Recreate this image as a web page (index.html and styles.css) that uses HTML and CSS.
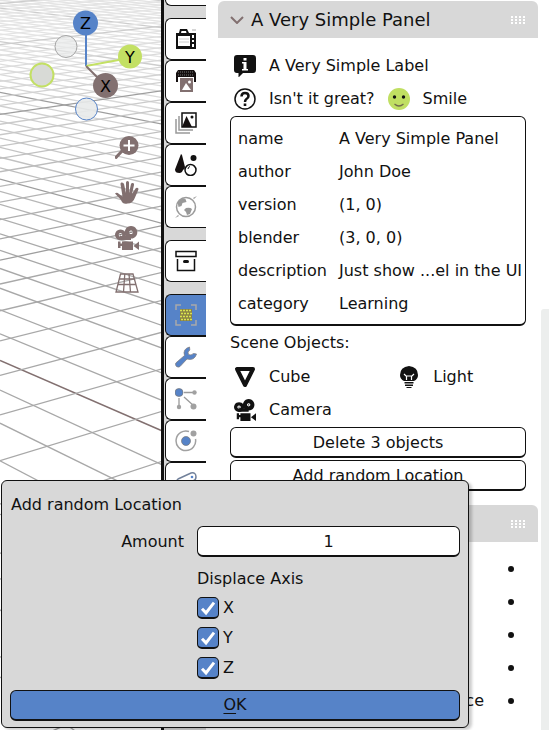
FILE: index.html
```html
<!DOCTYPE html>
<html lang="en">
<head>
<meta charset="utf-8">
<title>Add random Location</title>
<link rel="stylesheet" href="styles.css">
</head>
<body>
<svg class="defs" width="0" height="0" aria-hidden="true">
  <symbol id="movie-camera" viewBox="0 0 24 24">
    <path fill-rule="evenodd" d="M5.500 3.500a5.500 5.300 0 1 0 .01 0zM5.500 7a1.800 1.800 0 1 1-.01 0z"/>
    <path fill-rule="evenodd" d="M16 0a6.300 6.300 0 1 0 .01 0zM16 4.500a1.800 1.800 0 1 1-.01 0z"/>
    <path d="M5 10h11v4H5zM3 15.500h2.500v2H7v-2h11V24H7v-4H5.500v2H3zM18.500 20l5.500-4.500V24z"/>
    <circle cx="5.500" cy="8.800" r=".7"/><circle cx="16" cy="6.300" r=".7"/>
  </symbol>
  <symbol id="grip" viewBox="0 0 15 8">
    <path d="M0 0h2v2H0zM4 0h2v2H4zM8 0h2v2H8zM12 0h2v2h-2zM0 3h2v2H0zM4 3h2v2H4zM8 3h2v2H8zM12 3h2v2h-2zM0 6h2v2H0zM4 6h2v2H4zM8 6h2v2H8zM12 6h2v2h-2z"/>
  </symbol>
</svg>
<div class="app">
  <section class="viewport" aria-label="3D viewport">
    <svg class="scene" aria-hidden="true">
      <g id="grid"></g>
      <g fill="none" stroke-width="2">
        <path class="axis-z" d="M86 66V30"/>
        <path class="axis-y" d="M86 66l38-7"/>
        <path class="axis-x" d="M86 66l16 16"/>
      </g>
      <circle class="ring-x" cx="66" cy="46.500" r="11"/>
      <circle class="ring-y" cx="42" cy="75" r="11.500"/>
      <circle class="ring-z" cx="86.500" cy="109" r="11"/>
      <circle class="ball-z" cx="85.500" cy="23" r="12.500"/>
      <circle class="ball-y" cx="130" cy="56.500" r="12"/>
      <circle class="ball-x" cx="105.500" cy="85.500" r="12.500"/>
      <g class="ball-text">
        <text x="85.500" y="29">Z</text>
        <text x="130" y="62.500">Y</text>
        <text x="105.500" y="91.500">X</text>
      </g>
    </svg>
    <div class="tools">
      <button type="button" class="tool" aria-label="Zoom">
        <svg width="24" height="24" viewBox="0 0 24 24"><circle cx="14" cy="9.500" r="9.500"/><path d="M7 15l-6 6.500" stroke="#827070" stroke-width="3" stroke-linecap="round"/><path d="M14 4v11M8.500 9.500h11" stroke="#fff" stroke-width="2"/></svg>
      </button>
      <button type="button" class="tool" aria-label="Pan">
        <svg width="24" height="24" viewBox="0 0 24 24"><path d="M0 12.500q2-1.500 4 .5l3.500 2.500L5.500 3q0-2 1.500-1.500Q8.500 1.500 9 3l2 9V1.500q0-1.500 1.500-1.500T14 1.500V12l2-9q.5-1.500 2-1 1.500.4 1 2l-2 9 3.500-5.500q1-1.200 2.500-.5 1 .8 0 2.500l-3 7q-2 6-7.500 6Q8 24 6 19z"/></svg>
      </button>
      <button type="button" class="tool" aria-label="Camera view">
        <svg width="24" height="24"><use href="#movie-camera"/></svg>
      </button>
      <button type="button" class="tool" aria-label="Switch projection">
        <svg width="24" height="20" viewBox="0 0 24 20"><path fill="none" stroke="#827070" stroke-width="1.300" d="M5.500 1h12.500l5 18H1zM4.500 6h15M3 11.500h18M9.800 1L8.500 19M14 1l1.500 18"/></svg>
      </button>
    </div>
  </section>

  <nav class="tabs" aria-label="Properties">
    <div class="tab-group">
      <button type="button" class="tab stub" aria-label="Tool"></button>
    </div>
    <div class="tab-group">
      <button type="button" class="tab" aria-label="Render">
        <svg width="22" height="22" viewBox="0 0 22 22"><path fill="#111" fill-rule="evenodd" d="M1 5h3l1-4h7l2 4h7v16H1zM3 8v10h12V8zM6.500 3L6 5h5.500L11 3z"/><path d="M4 11h10M4 14h10" stroke="#ccc" stroke-width="1"/><path fill="#fff" d="M17 7h2v3h-2zM17 12h2v2h-2zM17 16h2v3h-2z"/><path d="M17 2h4" stroke="#aaa"/></svg>
      </button>
      <button type="button" class="tab" aria-label="Output">
        <svg width="22" height="22" viewBox="0 0 22 22"><path fill="#151010" d="M3 0h16l2 3v9h-2V7H3v5H1V3z"/><path fill="#827070" d="M5 8h13v14H5z"/><path fill="#fff" d="M7 20l4-7 5 7z"/><circle cx="14.500" cy="12" r="1.500" fill="#fff"/><path d="M3 2h16M3 5h16" stroke="#777" stroke-dasharray="1 1"/></svg>
      </button>
      <button type="button" class="tab" aria-label="View layer">
        <svg width="22" height="22" viewBox="0 0 22 22"><path fill="none" stroke="#999" stroke-width="1.500" d="M1 7v14h14M4 4v14h14"/><path fill="#fff" stroke="#111" stroke-width="1.500" d="M7 1h14v14H7z"/><path fill="#151010" d="M7 15l4.500-11 5.500 11z"/><circle cx="17" cy="5" r="1.500" fill="#111"/></svg>
      </button>
      <button type="button" class="tab" aria-label="Scene">
        <svg width="22" height="22" viewBox="0 0 22 22"><path fill="#151010" d="M6 0l1 1 3 12q0 2-2 3-1 3-3.500 3Q0 19 0 15.500z"/><circle cx="18.500" cy="4" r="3" fill="#111"/><circle cx="15.500" cy="16" r="5.500" fill="#fff" stroke="#111" stroke-width="1.500"/><path d="M13 15q0-2 2-2.500" fill="none" stroke="#111"/></svg>
      </button>
      <button type="button" class="tab" aria-label="World">
        <svg width="22" height="22" viewBox="0 0 22 22"><circle cx="11" cy="11" r="9.500" fill="#fff" stroke="#9b9b9b" stroke-width="1.500"/><path fill="#999" d="M2.500 6q4-5 8-3l1 3-4 1-1 3-3 1zM11 12q4-1 6 1l-2 5-3 1-1-3-2-2zM0 22l3-3 1 1zM22 0l-3 3-1-1z"/></svg>
      </button>
    </div>
    <div class="tab-group">
      <button type="button" class="tab" aria-label="Collection">
        <svg width="22" height="22" viewBox="0 0 22 22"><path fill="none" stroke="#111" stroke-width="1.500" d="M1 1.500h20v5H1zM2.500 9v11.500h17V9"/><rect x="8" y="10" width="6" height="3" rx="1.500" fill="#111"/></svg>
      </button>
    </div>
    <div class="tab-group">
      <button type="button" class="tab active" aria-label="Object">
        <svg width="22" height="22" viewBox="0 0 22 22"><path fill="none" stroke="#a9a9a9" stroke-width="1.500" d="M1 6V1h5M16 1h5v5M21 16v5h-5M6 21H1v-5"/><path fill="#8a8244" d="M5 5h12v12H5z"/><path d="M5 6.500h12M5 12.500h12" stroke="#d9e34e" stroke-width="1.500" stroke-dasharray="2 1"/><path d="M6 9.500h11M6 15.500h11" stroke="#d9e34e" stroke-width="1.500" stroke-dasharray="2 1"/></svg>
      </button>
      <button type="button" class="tab" aria-label="Modifiers">
        <svg width="22" height="22" viewBox="0 0 22 22"><path fill="#5683c8" stroke="#7d7d84" stroke-width=".8" d="M14.500 1q-7 2-5 8.500L.8 17q-.8 2 .7 3.500 2 1.200 3.500 0L12 13q7.500 2 9.500-5l-3-.5Q16 10 13.500 8.500 12 6 14.800 4z"/></svg>
      </button>
      <button type="button" class="tab" aria-label="Particles">
        <svg width="22" height="22" viewBox="0 0 22 22"><path stroke="#9b9b9b" stroke-width="1.300" d="M9 4.500h10M4 10v9M9 9l10 9"/><circle cx="4" cy="4.500" r="4" fill="#5683c8" stroke="#777" stroke-width=".7"/><g fill="#a1a1a1"><circle cx="19.500" cy="4.500" r="2.200"/><circle cx="4" cy="19" r="2.200"/><circle cx="18.500" cy="18.500" r="3"/></g></svg>
      </button>
      <button type="button" class="tab" aria-label="Physics">
        <svg width="22" height="22" viewBox="0 0 22 22"><path fill="none" stroke="#a1a1a1" stroke-width="1.500" d="M14 1.500A9.800 9.800 0 1 0 20.500 9"/><circle cx="18.500" cy="3.500" r="3" fill="#a1a1a1"/><circle cx="11" cy="11" r="4.500" fill="#5683c8" stroke="#777" stroke-width=".7"/></svg>
      </button>
      <button type="button" class="tab" aria-label="Constraints">
        <svg width="22" height="22" viewBox="0 0 22 22"><path fill="none" stroke="#71809a" stroke-width="1.500" d="M3 7l13-6q5-1 5 4 0 3-3 4L6 17q-4 2-5-3t2-7z"/><circle cx="17" cy="5" r="1.300" fill="#5683c8"/></svg>
      </button>
    </div>
  </nav>

  <main class="properties">
    <section class="panel">
      <h1 class="panel-header">
        <svg class="chevron" width="14" height="8" viewBox="0 0 14 8"><path d="M1 1l6 6 6-6"/></svg>
        <span class="panel-title">A Very Simple Panel</span>
        <svg class="grip" width="15" height="8"><use href="#grip"/></svg>
      </h1>
      <div class="panel-body">
        <div class="row">
          <span class="item">
            <svg width="22" height="22" viewBox="0 0 22 22"><path fill="#111" d="M3 0h16q3 0 3 3v12q0 3-3 3H9l-4.500 4.500V18H3q-3 0-3-3V3q0-3 3-3z"/><path fill="#fff" d="M9.500 3h3v2.500h-3zM8 7h4.500v7H14v1.500H8V14h1.500V8.500H8z"/></svg>
            A Very Simple Label
          </span>
        </div>
        <div class="row">
          <span class="item">
            <svg width="22" height="22" viewBox="0 0 22 22"><circle cx="11" cy="11" r="10" fill="none" stroke="#111" stroke-width="1.500"/><path fill="none" stroke="#111" stroke-width="2.500" d="M7.500 8.500q0-3.500 3.500-3.500t3.500 3q0 2-2 3-1.500 1-1.500 3"/><path fill="#111" d="M9.700 15.500h2.600V18H9.700z"/></svg>
            Isn't it great?
          </span>
          <span class="item">
            <svg width="22" height="22" viewBox="0 0 22 22"><circle cx="11" cy="11" r="11" fill="#c0df62"/><circle cx="6.500" cy="9" r="1.700" fill="#111"/><circle cx="15.500" cy="9" r="1.700" fill="#111"/><path fill="none" stroke="#746d4d" stroke-width="1.300" d="M6.500 16q4.500 4 9 0"/></svg>
            Smile
          </span>
        </div>
        <table class="info">
          <tbody>
            <tr><th scope="row">name</th><td>A Very Simple Panel</td></tr>
            <tr><th scope="row">author</th><td>John Doe</td></tr>
            <tr><th scope="row">version</th><td>(1, 0)</td></tr>
            <tr><th scope="row">blender</th><td>(3, 0, 0)</td></tr>
            <tr><th scope="row">description</th><td>Just show ...el in the UI</td></tr>
            <tr><th scope="row">category</th><td>Learning</td></tr>
          </tbody>
        </table>
        <h2 class="caption">Scene Objects:</h2>
        <div class="objects">
          <span class="item">
            <svg width="22" height="22" viewBox="0 0 22 22"><path fill="none" stroke="#111" stroke-width="4" stroke-linejoin="round" d="M3 3h16l-8 16z"/></svg>
            Cube
          </span>
          <span class="item">
            <svg width="22" height="22" viewBox="0 0 22 22"><path fill="#111" d="M11 0q9 1 9 9 0 4-4 6H6Q2 13 2 9q0-8 9-9zM6.500 16h9v1.500h-9zM7 18.500h8V20H7zM8.500 21h5v1h-5z"/><path fill="none" stroke="#fff" stroke-width="1.200" d="M6 8l2 2h6l2-2M8.500 10v4M13.500 10v4"/></svg>
            Light
          </span>
          <span class="item">
            <svg width="22" height="22"><use href="#movie-camera" fill="#111"/></svg>
            Camera
          </span>
        </div>
        <div class="actions">
          <button type="button" class="button">Delete 3 objects</button>
          <button type="button" class="button">Add random Location</button>
        </div>
      </div>
    </section>
    <section class="panel next">
      <div class="panel-header">
        <svg class="grip" width="15" height="8"><use href="#grip"/></svg>
      </div>
      <ul class="props">
        <li><i class="dot"></i></li>
        <li><i class="dot"></i></li>
        <li><i class="dot"></i></li>
        <li><i class="dot"></i></li>
        <li>ce<i class="dot"></i></li>
      </ul>
    </section>
    <div class="scrollbar"></div>
  </main>

  <form class="dialog" role="dialog" aria-labelledby="dialog-title">
    <h2 class="dialog-title" id="dialog-title">Add random Location</h2>
    <div class="fields">
      <label class="field-label" for="amount">Amount</label>
      <input class="number" id="amount" type="text" inputmode="numeric" value="1">
      <fieldset class="axes">
        <legend>Displace Axis</legend>
        <label class="check"><input type="checkbox" checked>X</label>
        <label class="check"><input type="checkbox" checked>Y</label>
        <label class="check"><input type="checkbox" checked>Z</label>
      </fieldset>
    </div>
    <button type="button" class="ok"><u>O</u>K</button>
  </form>
</div>
<script src="grid.js"></script>
</body>
</html>
```
FILE: styles.css
```css
* {
  box-sizing: border-box;
}

body {
  margin: 0;
  background: #fff;
  color: #111;
  font: 16px/20px "DejaVu Sans", sans-serif;
}

button,
input {
  font: inherit;
  color: inherit;
}

h1,
h2 {
  margin: 0;
  font-weight: normal;
}

svg {
  display: block;
  flex: none;
}

.defs {
  position: absolute;
}

.app {
  position: relative;
  display: grid;
  grid-template-columns: minmax(0, 161fr) 45px minmax(0, 343fr);
  grid-template-rows: 100%;
  height: 100vh;
  overflow: hidden;
}

/* 3D viewport */
.viewport {
  position: relative;
  overflow: hidden;
}

.scene {
  position: absolute;
  inset: 0;
  width: 100%;
  height: 100%;
}

.axis-z { stroke: #5683c8; }
.axis-y { stroke: #c3e064; }
.axis-x { stroke: #827070; }
.ball-z { fill: #5683c8; }
.ball-y { fill: #c3e064; }
.ball-x { fill: #827070; }
.ring-x { fill: #e8e9e9; fill-opacity: 0.7; stroke: #a5a5a5; }
.ring-y { fill: #d8dad6; stroke: #c3e064; stroke-width: 2; }
.ring-z { fill: #e8eaea; fill-opacity: 0.9; stroke: #5683c8; }

.ball-text {
  text-anchor: middle;
}

.tools {
  position: relative;
  display: flex;
  flex-direction: column;
  align-items: flex-end;
  gap: 21px;
  padding: 136px 22px 0 0;
}

.tool {
  display: grid;
  place-items: center;
  width: 24px;
  height: 24px;
  padding: 0;
  border: 0;
  background: none;
  fill: #827070;
}

/* Property tabs */
.tabs {
  display: flex;
  flex-direction: column;
  gap: 12px;
  padding-left: 1px;
  border-left: 3px solid #111;
  background: #d8d8d8;
}

.tab {
  display: grid;
  place-items: center start;
  width: 100%;
  height: 42px;
  padding: 0 0 0 9px;
  border: 1px solid #111;
  border-right: 0;
  border-radius: 6px 0 0 6px;
  background: #fff;
}

.tab.stub {
  height: 6px;
  border-top: 0;
  border-radius: 0 0 0 6px;
}

.tab.active {
  background: #5683c8;
}

/* Properties */
.properties {
  position: relative;
  padding: 1px 11px 0 12px;
}

.panel-header {
  display: flex;
  align-items: center;
  gap: 7px;
  height: 37px;
  padding: 0 12px;
  border-radius: 6px 6px 0 0;
  background: #d8d8d8;
  font-size: 18px;
}

.chevron {
  fill: none;
  stroke: #827070;
  stroke-width: 2;
}

.grip {
  margin-left: auto;
  fill: #fff;
}

.panel-body {
  padding: 11px 12px 0;
}

.row {
  display: flex;
  gap: 13px;
}

.item {
  display: flex;
  align-items: center;
  gap: 13px;
  height: 33px;
  white-space: nowrap;
}

.row,
.objects {
  padding-left: 4px;
}

.info {
  width: 100%;
  margin-top: 1px;
  padding: 5px 0 4px 7px;
  border: 1px solid #111;
  border-bottom-width: 2px;
  border-radius: 6px;
  border-spacing: 0;
}

.info th,
.info td {
  height: 33px;
  padding: 0;
  font-weight: normal;
  text-align: left;
  white-space: nowrap;
}

.info th {
  width: 101px;
}

.caption {
  font-size: 16px;
  line-height: 34px;
}

.objects {
  display: grid;
  grid-template-columns: 9fr 7fr;
}

.actions {
  display: grid;
  gap: 2px;
  margin-top: 1px;
}

.button {
  height: 31px;
  padding: 2px 0 0;
  border: 1px solid #111;
  border-bottom-width: 2px;
  border-radius: 6px;
  background: #fff;
}

.next {
  margin-top: 14px;
}

.props {
  margin: 0;
  padding: 10px 24px 0 0;
  list-style: none;
}

.props li {
  display: flex;
  align-items: center;
  justify-content: flex-end;
  gap: 24px;
  height: 33px;
}

.dot {
  width: 6px;
  height: 6px;
  border-radius: 50%;
  background: #111;
}

.scrollbar {
  position: absolute;
  top: 309px;
  right: 0;
  bottom: 0;
  width: 8px;
  border-radius: 3px 0 0 0;
  background: #eceeed;
}

/* Operator dialog */
.dialog {
  position: absolute;
  top: 480px;
  left: 1px;
  right: 80px;
  padding: 14px 8px 6px;
  border: 1px solid #111;
  border-radius: 6px;
  background: #d8d8d8;
  box-shadow: 3px 2px 3px #0003;
}

.dialog-title {
  padding-left: 1px;
  font-size: 16px;
  line-height: 20px;
}

.fields {
  display: grid;
  grid-template-columns: 174px 1fr;
  column-gap: 13px;
  align-items: center;
  padding-top: 11px;
}

.field-label {
  text-align: right;
}

.number {
  width: 100%;
  height: 31px;
  padding: 0;
  border: 1px solid #111;
  border-bottom-width: 2px;
  border-radius: 6px;
  background: #fff;
  text-align: center;
}

.axes {
  grid-column: 2;
  display: grid;
  gap: 8px;
  margin: 0;
  padding: 8px 0 0;
  border: 0;
}

.axes legend {
  padding: 12px 0 0;
}

.check {
  display: flex;
  align-items: center;
  gap: 4px;
  height: 22px;
}

.check input {
  appearance: none;
  width: 22px;
  height: 22px;
  margin: 0;
  border: 1px solid #111;
  border-bottom-width: 2px;
  border-radius: 5px;
}

.check input:checked {
  background: #5683c8 url("data:image/svg+xml,%3Csvg xmlns='http://www.w3.org/2000/svg' viewBox='0 0 20 20'%3E%3Cpath d='M4 11l4 4 8-10' fill='none' stroke='%23fff' stroke-width='3'/%3E%3C/svg%3E") center / 20px 20px no-repeat;
}

.ok {
  display: block;
  width: 100%;
  height: 31px;
  margin-top: 11px;
  padding: 0;
  border: 1px solid #111;
  border-bottom-width: 2px;
  border-radius: 6px;
  background: #5683c8;
}

.ok u {
  text-underline-offset: 3px;
}
```
FILE: grid.js
```js
// Perspective floor grid: both line families converge on the horizon.
const grid = document.getElementById("grid");
const horizon = -153.5;
const reach = 700;

function addFamily(vanish, base, step, from, to, isMajor, axis) {
  for (let n = from; n <= to; n++) {
    const y0 = 1 / (base + step * n) + horizon;
    const slope = (vanish.y - y0) / vanish.x;
    const line = document.createElementNS("http://www.w3.org/2000/svg", "line");
    line.setAttribute("x1", 0);
    line.setAttribute("y1", y0);
    line.setAttribute("x2", reach);
    line.setAttribute("y2", y0 + slope * reach);
    const nearness = Math.min(1, Math.max(0, (y0 - 40) / 200));
    let shade = Math.round(228 - nearness * 60);
    if (isMajor(n)) shade = y0 > 50 ? 158 : 205;
    line.setAttribute("stroke", n === axis ? "#827070" : `rgb(${shade},${shade},${shade})`);
    line.setAttribute("stroke-width", n === axis ? 1.5 : 1.3);
    grid.append(line);
  }
}

addFamily({ x: -1122, y: -127 }, 0.001946, 0.000106, -8, 60, n => n % 10 === 0, 0);
addFamily({ x: 2180, y: -205 }, 0.001628, 0.0001315, -6, 38, n => (n + 34) % 10 === 0, null);
```
